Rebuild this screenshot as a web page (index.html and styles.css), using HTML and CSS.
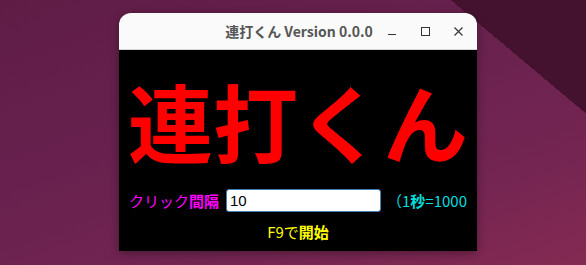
FILE: index.html
```html
<!DOCTYPE html>
<html lang="ja">
<head>
    <meta charset="UTF-8">
    <meta name="viewport" content="width=device-width, initial-scale=1.0">
    <title>連打くん Version 0.0.0</title>
    <link rel="stylesheet" href="styles.css">
</head>
<body>
    <div class="desktop">
        <div class="window">
            <div class="titlebar">
                <span class="title">連打くん Version 0.0.0</span>
                <div class="controls">
                    <span class="ctrl">
                        <svg width="10" height="10" viewBox="0 0 10 10"><path d="M1 8.5h8" stroke="#333" stroke-width="1"/></svg>
                    </span>
                    <span class="ctrl">
                        <svg width="10" height="10" viewBox="0 0 10 10"><rect x="1.5" y="1.5" width="8" height="8" fill="none" stroke="#333" stroke-width="1"/></svg>
                    </span>
                    <span class="ctrl">
                        <svg width="10" height="10" viewBox="0 0 10 10"><path d="M1.5 1.5l8 8M9.5 1.5l-8 8" stroke="#333" stroke-width="1.1"/></svg>
                    </span>
                </div>
            </div>
            <div class="content">
                <h1 class="logo">連打くん</h1>
                <div class="row">
                    <label class="label" for="interval">クリック<b>間隔</b></label>
                    <input class="interval" id="interval" type="text" value="10">
                    <span class="hint">（1<b>秒</b>=1000</span>
                </div>
                <div class="start">F9で<b>開始</b></div>
            </div>
        </div>
    </div>
</body>
</html>
```

FILE: styles.css
```css
html, body {
    margin: 0;
    padding: 0;
    height: 265px;
    overflow: hidden;
}

body {
    font-family: "Noto Sans", "Noto Sans CJK JP", sans-serif;
    background:
        linear-gradient(40deg, transparent 85%, #44122f 85%) no-repeat,
        linear-gradient(160deg, #5f1d46 0%, #68214e 40%, #742552 75%, #842a52 100%);
}

.desktop {
    padding: 13px 0 0 119px;
}

.window {
    width: 358px;
    box-shadow: 0 2px 10px rgba(0, 0, 0, 0.35);
    border-radius: 12px 12px 0 0;
}

.titlebar {
    height: 36px;
    background-color: #fafafa;
    border-bottom: 1px solid #d6d6d6;
    border-radius: 12px 12px 0 0;
    display: flex;
    align-items: center;
    position: relative;
}

.title {
    flex: 1;
    text-align: center;
    font-family: "Noto Sans CJK JP", sans-serif;
    font-weight: bold;
    font-size: 14px;
    color: #555555;
    padding-left: 2px;
}

.controls {
    position: absolute;
    right: 14px;
    top: 13px;
    display: flex;
    gap: 23px;
}

.ctrl {
    width: 10px;
    height: 10px;
    display: block;
}

.ctrl svg {
    display: block;
}

.content {
    background-color: #000000;
    height: 201px;
    padding-top: 27px;
    box-sizing: border-box;
    text-align: center;
}

.logo {
    margin: 0;
    font-family: "Noto Sans CJK JP", sans-serif;
    font-weight: bold;
    font-size: 85px;
    line-height: 1;
    color: #ff0000;
    white-space: nowrap;
}

.row {
    display: flex;
    align-items: center;
    padding: 0 10px;
    margin-top: 27px;
    font-family: "Noto Sans CJK JP", sans-serif;
    font-size: 15px;
}

.label {
    color: #ff00ff;
    margin-right: 7px;
}

.interval {
    width: 155px;
    height: 23px;
    box-sizing: border-box;
    border: 1px solid #3f7fb3;
    border-radius: 3px;
    padding: 0 3px;
    font-family: "Liberation Sans", sans-serif;
    font-size: 15px;
    color: #000000;
    outline: none;
}

.hint {
    margin-left: auto;
    color: #00dede;
}

.start {
    margin-top: 9px;
    font-family: "Noto Sans CJK JP", sans-serif;
    font-size: 15px;
    color: #ffff00;
}
```
